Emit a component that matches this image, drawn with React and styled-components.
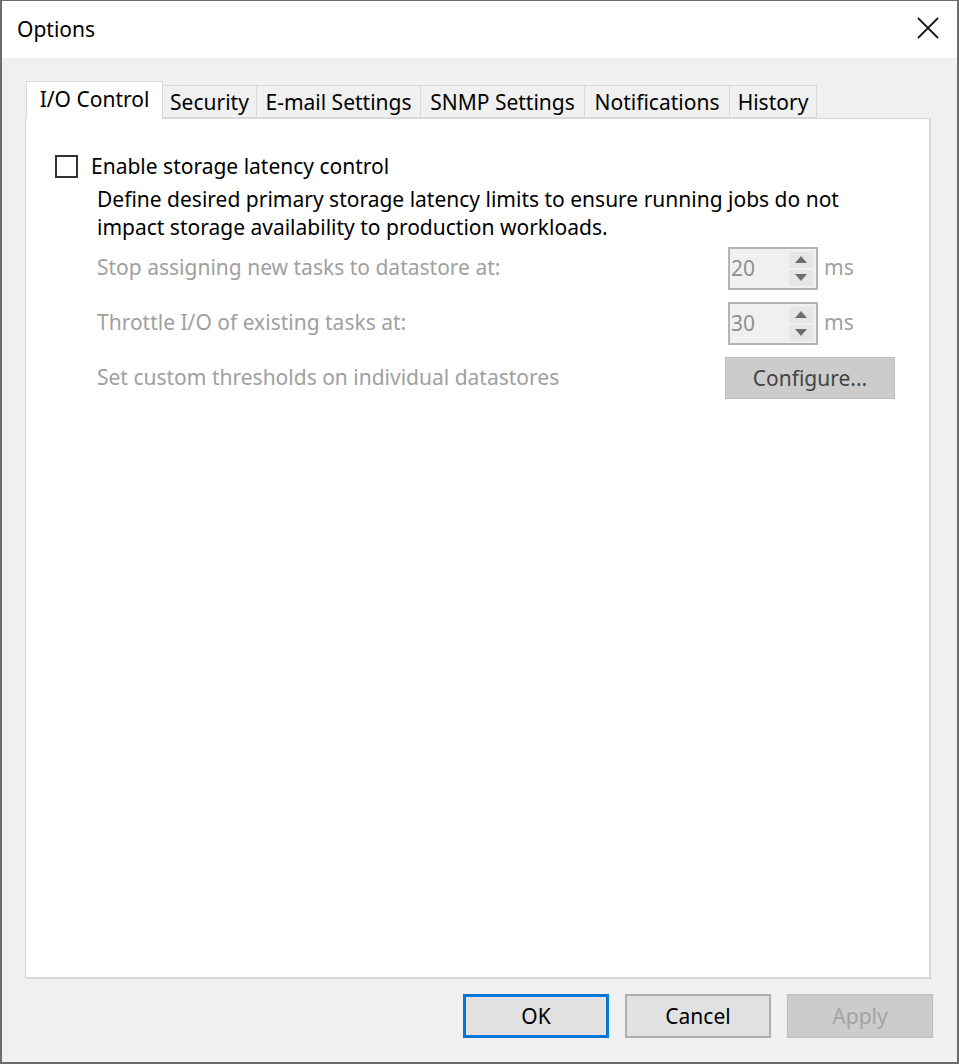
import React from 'react';
import styled, { createGlobalStyle } from 'styled-components';

const GlobalStyle = createGlobalStyle`
  html, body {
    margin: 0;
    padding: 0;
    background: #ffffff;
  }
  body {
    font-family: "Noto Sans", "Open Sans", sans-serif;
    font-size: 21px;
    color: #000000;
  }
`;

const tabs = [
  { label: 'I/O Control', width: 137 },
  { label: 'Security', width: 95 },
  { label: 'E-mail Settings', width: 165 },
  { label: 'SNMP Settings', width: 165 },
  { label: 'Notifications', width: 146 },
  { label: 'History', width: 88 },
];

const Window = styled.div`
  width: 959px;
  height: 1064px;
  box-sizing: border-box;
  border: 2px solid #6b6b6b;
  border-top-width: 1px;
  display: flex;
  flex-direction: column;
  background: #f0f0f0;
`;

const TitleBar = styled.div`
  height: 57px;
  flex: none;
  background: #ffffff;
  display: flex;
  align-items: center;
  justify-content: space-between;
  padding: 0 16px 0 15px;
`;

const Title = styled.span`
  font-size: 21px;
  color: #000;
  margin-top: -1px;
`;

const CloseButton = styled.div`
  width: 26px;
  height: 26px;
  display: flex;
  align-items: center;
  justify-content: center;
  margin-top: -4px;
`;

const Body = styled.div`
  flex: 1;
  display: flex;
  flex-direction: column;
  padding: 22px 26px 0 23px;
`;

const TabStrip = styled.div`
  display: flex;
  align-items: flex-end;
  height: 38px;
  padding-left: 1px;
  position: relative;
  z-index: 1;
`;

const Tab = styled.div`
  box-sizing: border-box;
  width: ${p => p.$width}px;
  height: ${p => (p.$active ? '38px' : '33px')};
  background: ${p => (p.$active ? '#ffffff' : '#f0f0f0')};
  border: 1px solid #d9d9d9;
  border-bottom: ${p => (p.$active ? 'none' : '1px solid #d9d9d9')};
  margin-left: ${p => (p.$first ? '0' : '-1px')};
  margin-bottom: ${p => (p.$active ? '-1px' : '0')};
  display: flex;
  align-items: center;
  justify-content: center;
  padding-top: ${p => (p.$active ? '0' : '1px')};
  padding-bottom: ${p => (p.$active ? '4px' : '0')};
  font-size: 21px;
  color: #000;
  white-space: nowrap;
`;

const Panel = styled.div`
  box-sizing: border-box;
  height: 861px;
  background: #ffffff;
  border: 1px solid #d9d9d9;
  border-right-width: 2px;
  border-bottom-width: 2px;
  padding: 35px 0 0 29px;
`;

const CheckRow = styled.label`
  display: flex;
  align-items: center;
  gap: 13px;
  height: 25px;
`;

const CheckLabel = styled.span`
  margin-top: -2px;
`;

const CheckBox = styled.span`
  box-sizing: border-box;
  width: 23px;
  height: 23px;
  border: 2px solid #333333;
  background: #fff;
`;

const Indented = styled.div`
  padding-left: 42px;
`;

const Description = styled.p`
  margin: 6px 0 0;
  line-height: 28px;
  font-size: 21px;
  color: #000;
`;

const SettingRow = styled.div`
  display: grid;
  grid-template-columns: 629px auto;
  align-items: center;
  margin-top: ${p => p.$mt}px;
`;

const Muted = styled.span`
  color: #a0a0a0;
  font-size: 21px;
  margin-top: -3px;
`;

const SpinGroup = styled.div`
  display: flex;
  align-items: center;
  gap: 6px;
  margin-left: 2px;
`;

const SpinBox = styled.div`
  box-sizing: border-box;
  width: 90px;
  height: 43px;
  border: 2px solid #b4b4b4;
  background: #f0f0f0;
  display: flex;
  align-items: center;
  padding: 3px 3px 3px 1px;
`;

const SpinValue = styled.span`
  flex: 1;
  color: #8f8f8f;
  font-size: 21px;
  margin-top: -2px;
`;

const SpinArrows = styled.div`
  display: flex;
  flex-direction: column;
  gap: 2px;
  width: 24px;
`;

const Arrow = styled.div`
  height: 16px;
  background: #e6e6e6;
  display: flex;
  align-items: center;
  justify-content: center;
`;

const Unit = styled.span`
  color: #a0a0a0;
  font-size: 21px;
  margin-top: -3px;
`;

const ConfigureButton = styled.div`
  box-sizing: border-box;
  width: 170px;
  height: 42px;
  margin-left: -1px;
  background: #cccccc;
  border: 1px solid #bfbfbf;
  display: flex;
  align-items: center;
  justify-content: center;
  color: #444444;
  font-size: 21px;
`;

const Footer = styled.div`
  display: flex;
  justify-content: flex-end;
  gap: 16px;
  padding: 15px 0 0;
  margin-right: -2px;
`;

const Button = styled.div`
  box-sizing: border-box;
  width: 146px;
  height: 44px;
  display: flex;
  align-items: center;
  justify-content: center;
  font-size: 21px;
  background: ${p => (p.$disabled ? '#cccccc' : '#e1e1e1')};
  color: ${p => (p.$disabled ? '#a3a3a3' : '#000000')};
  border: ${p =>
    p.$default ? '3px solid #0078d7' : p.$disabled ? '1px solid #bfbfbf' : '2px solid #adadad'};
`;

const UpIcon = () => (
  <svg width="12" height="7" viewBox="0 0 12 7">
    <path d="M6 0 L12 7 L0 7 Z" fill="#6d6d6d" />
  </svg>
);

const DownIcon = () => (
  <svg width="12" height="7" viewBox="0 0 12 7">
    <path d="M0 0 L12 0 L6 7 Z" fill="#6d6d6d" />
  </svg>
);

const Spinner = ({ value }) => (
  <SpinGroup>
    <SpinBox>
      <SpinValue>{value}</SpinValue>
      <SpinArrows>
        <Arrow><UpIcon /></Arrow>
        <Arrow><DownIcon /></Arrow>
      </SpinArrows>
    </SpinBox>
    <Unit>ms</Unit>
  </SpinGroup>
);

export default function App() {
  return (
    <>
      <GlobalStyle />
      <Window>
        <TitleBar>
          <Title>Options</Title>
          <CloseButton>
            <svg width="22" height="22" viewBox="0 0 22 22">
              <path d="M1 1 L21 21 M21 1 L1 21" stroke="#1a1a1a" strokeWidth="1.8" />
            </svg>
          </CloseButton>
        </TitleBar>
        <Body>
          <TabStrip>
            {tabs.map((t, i) => (
              <Tab key={t.label} $width={t.width} $active={i === 0} $first={i === 0}>{t.label}</Tab>
            ))}
          </TabStrip>
          <Panel>
            <CheckRow>
              <CheckBox />
              <CheckLabel>Enable storage latency control</CheckLabel>
            </CheckRow>
            <Indented>
              <Description>
                Define desired primary storage latency limits to ensure running jobs do not
                <br />
                impact storage availability to production workloads.
              </Description>
              <SettingRow $mt={6}>
                <Muted>Stop assigning new tasks to datastore at:</Muted>
                <Spinner value="20" />
              </SettingRow>
              <SettingRow $mt={12}>
                <Muted>Throttle I/O of existing tasks at:</Muted>
                <Spinner value="30" />
              </SettingRow>
              <SettingRow $mt={12}>
                <Muted>Set custom thresholds on individual datastores</Muted>
                <ConfigureButton>Configure...</ConfigureButton>
              </SettingRow>
            </Indented>
          </Panel>
          <Footer>
            <Button $default>OK</Button>
            <Button>Cancel</Button>
            <Button $disabled>Apply</Button>
          </Footer>
        </Body>
      </Window>
    </>
  );
}
